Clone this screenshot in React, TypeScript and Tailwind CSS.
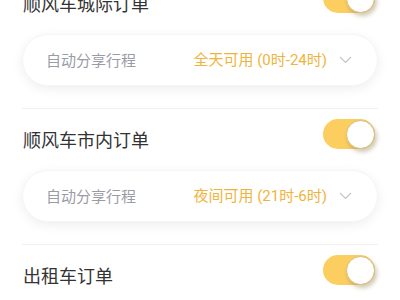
import React from "react";

const font = { fontFamily: '"Noto Sans CJK SC", "Noto Sans", sans-serif' };

function Toggle() {
  return (
    <div className="relative w-[52px] h-[30px] rounded-full bg-[#fcce60] shrink-0">
      <div className="absolute right-0 top-[1px] w-[29px] h-[29px] rounded-full bg-white border border-[#d3bf78] shadow-[2px_3px_4px_rgba(120,100,40,0.35)]" />
    </div>
  );
}

function Chevron() {
  return (
    <svg width="13" height="8" viewBox="0 0 13 8" className="ml-[12px]">
      <path d="M1 1 L6.5 6.5 L12 1" fill="none" stroke="#c4c4c8" strokeWidth="1.2" />
    </svg>
  );
}

function Section({ title, value, first }: { title: string; value: string; first?: boolean }) {
  return (
    <div className="flex flex-col">
      <div className={`h-px bg-[#f1f1f3] ${first ? "opacity-0" : ""}`} />
      <div className="flex items-center justify-between mt-[10px] pr-[3px]">
        <span className="text-[18px] leading-none text-[#333333] mt-[10px] ml-px">{title}</span>
        <Toggle />
      </div>
      <div className="mt-[21px] h-[52px] rounded-full bg-white shadow-[0_3px_12px_rgba(0,0,0,0.07)] border border-[#f6f6f6] flex items-center justify-between pl-[23px] pr-[25px]">
        <span className="text-[15px] text-[#9b9ba6]">自动分享行程</span>
        <div className="flex items-center">
          <span
            className="text-[15px] text-[#efb43c]"
            style={{ fontFamily: 'Roboto, "Noto Sans CJK SC", sans-serif' }}
          >
            {value}
          </span>
          <Chevron />
        </div>
      </div>
      <div className="h-[22px]" />
    </div>
  );
}

export default function App() {
  return (
    <div className="w-[400px] h-[300px] overflow-hidden bg-white" style={font}>
      <div className="px-[22px] mt-[-28px] flex flex-col">
        <Section title="顺风车城际订单" value="全天可用 (0时-24时)" first />
        <Section title="顺风车市内订单" value="夜间可用 (21时-6时)" />
        <Section title="出租车订单" value="全天可用 (0时-24时)" />
      </div>
    </div>
  );
}
